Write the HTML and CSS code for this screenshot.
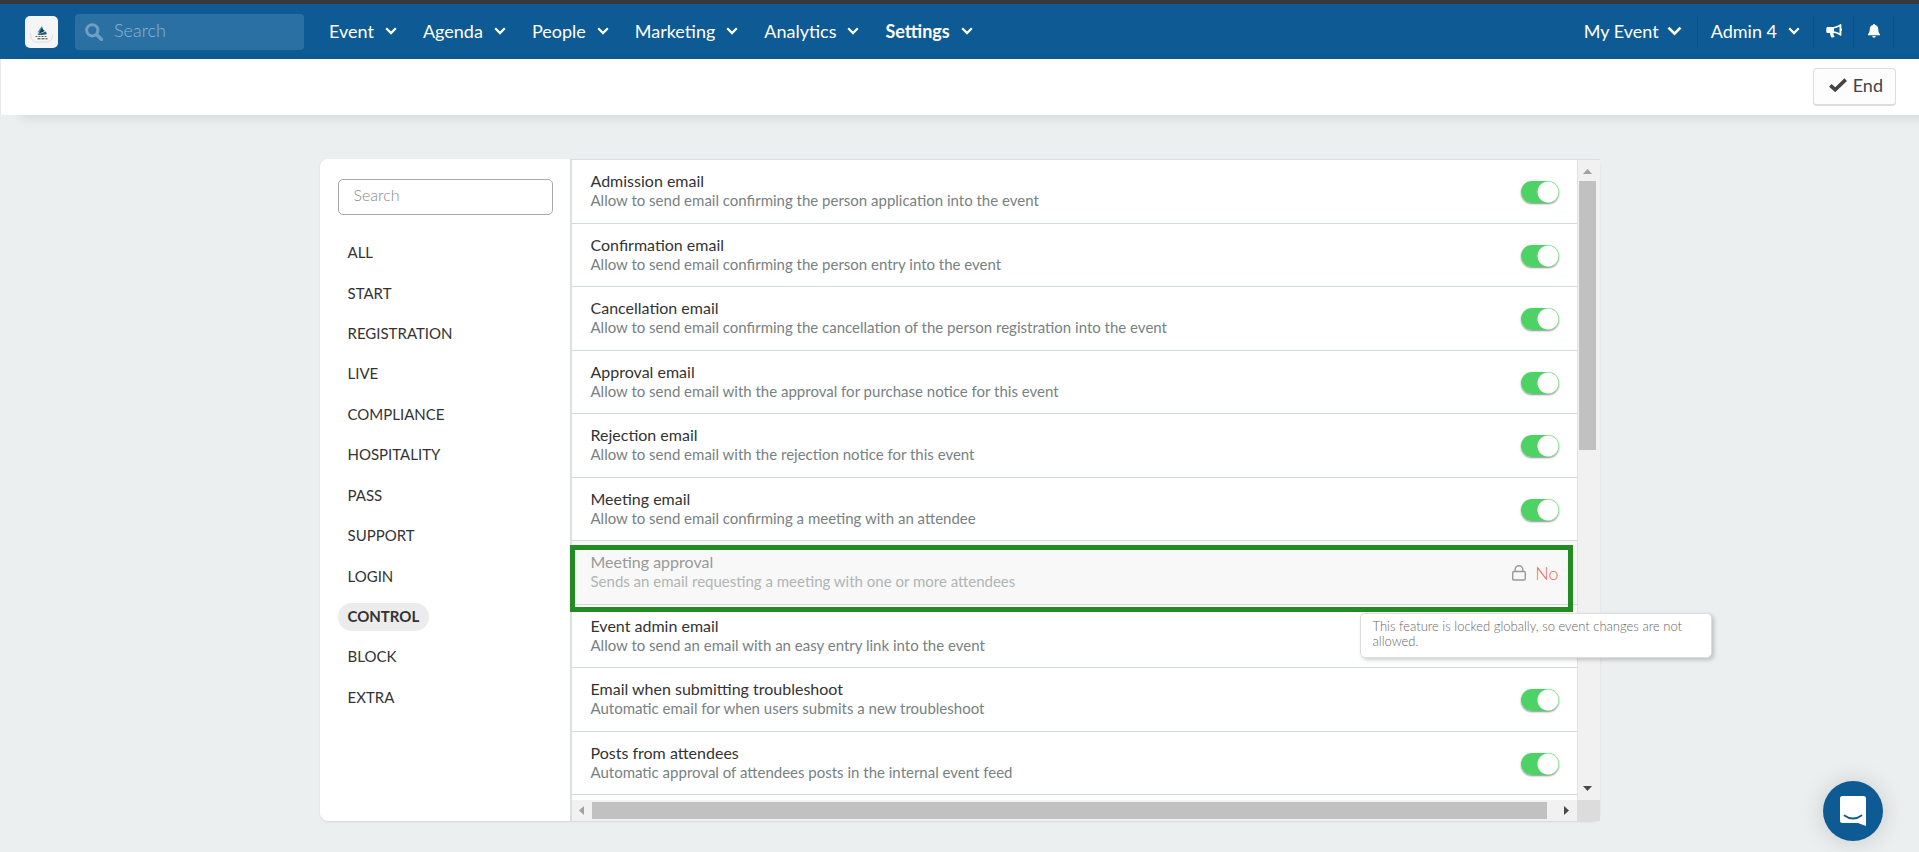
FILE: index.html
```html
<!DOCTYPE html>
<html lang="en">
<head>
<meta charset="utf-8">
<meta name="viewport" content="width=device-width, initial-scale=1">
<title>Event settings</title>
<link rel="stylesheet" href="styles.css">
</head>
<body>
<svg class="defs" aria-hidden="true">
  <symbol id="chevron" viewBox="0 0 12 8"><path d="M1.2 1.3 6 6.1l4.8-4.8" fill="none" stroke="currentColor" stroke-width="2.2"/></symbol>
</svg>

<header class="topbar">
  <a class="logo" href="#" aria-label="Home">
    <svg viewBox="0 0 33 32" width="33" height="32">
      <path d="M16.500 10.500 12.500 16.500c2 0 3.500-1 4.500-3z" fill="#2f8fae"/>
      <path d="M17 9.500c0 3 1.300 4.500 3 5.500l-7 3.200c2-2.500 3.800-4.700 4-8.700z" fill="#163a4c"/>
      <path d="m12 18.800 9-3.300.8 2.700c-3 .9-6 .9-9.800.6z" fill="#1b5d7c"/>
      <path d="M10.500 20.500h12" stroke="#666" stroke-width="1" stroke-dasharray="2 1"/>
      <path d="M12.500 22.800h10" stroke="#333" stroke-width="1" stroke-dasharray="3 1"/>
      <path d="M5.500 17c0 6 2 9 7 9h9c4 0 6-3 6-7" fill="none" stroke="#dedede"/>
    </svg>
  </a>
  <label class="topsearch">
    <svg viewBox="0 0 18 18" width="18" height="18" aria-hidden="true"><circle cx="7.300" cy="7.300" r="5.600" fill="none" stroke="currentColor" stroke-width="3"/><path d="m11.500 11.500 5 5" stroke="currentColor" stroke-width="3.400" stroke-linecap="round"/></svg>
    <input type="search" placeholder="Search" aria-label="Search">
  </label>
  <nav class="menu">
    <button>Event <svg class="chev"><use href="#chevron"/></svg></button>
    <button>Agenda <svg class="chev"><use href="#chevron"/></svg></button>
    <button>People <svg class="chev"><use href="#chevron"/></svg></button>
    <button>Marketing <svg class="chev"><use href="#chevron"/></svg></button>
    <button>Analytics <svg class="chev"><use href="#chevron"/></svg></button>
    <button class="current">Settings <svg class="chev"><use href="#chevron"/></svg></button>
  </nav>
  <div class="account">
    <button class="event-switch">My Event <svg class="chev-big"><use href="#chevron"/></svg></button>
    <button class="admin">Admin 4 <svg class="chev"><use href="#chevron"/></svg></button>
    <button class="tool" aria-label="Announcements">
      <svg viewBox="0 0 16 14" width="16" height="14"><path fill="currentColor" fill-rule="evenodd" d="M14.500 0c.6 0 .9.400.9 1v3.600c.8.300.8 2 0 2.300V11c0 .8-.5 1-1 .8-2-1.600-4-2.500-6.500-2.800-.8.500-.5 1.300 0 1.800-.4.800.2 1.300.8 1.800-.8 1.200-3 1-3.700.3C4.600 11.500 3.800 10.500 4.200 9H2C.9 9 .3 8.300.3 7.400V4.600C.3 3.600 1 3 2 3h4.500c3-.2 5.500-1.300 8-3zm-1 2.500c-1.600 1-3.500 1.700-5.500 2v2.700c2 .3 3.900 1 5.500 2z"/></svg>
    </button>
    <button class="tool" aria-label="Notifications">
      <svg viewBox="0 0 12 14" width="12" height="14"><path fill="currentColor" d="M6 0c.7 0 1 .4 1 1.100 2.200.5 3.300 2 3.300 4.100 0 2.600.5 3.800 1.700 4.900v1.100H0v-1.100c1.200-1.100 1.700-2.300 1.700-4.900C1.700 3.100 2.800 1.600 5 1.100 5 .4 5.300 0 6 0zM4.300 12h3.400c0 1-.7 1.700-1.700 1.700S4.300 13 4.300 12z"/></svg>
    </button>
  </div>
</header>

<div class="actionbar">
  <button class="end"><svg viewBox="0 0 18 14" width="18" height="14" aria-hidden="true"><path d="m1.300 7.300 4.900 4.400L16.700 1.600" fill="none" stroke="currentColor" stroke-width="3.600"/></svg>End</button>
</div>

<main class="page">
  <section class="card">
    <aside class="side">
      <input class="filter" type="search" placeholder="Search" aria-label="Search settings">
      <nav class="groups">
        <a href="#">ALL</a>
        <a href="#">START</a>
        <a href="#">REGISTRATION</a>
        <a href="#">LIVE</a>
        <a href="#">COMPLIANCE</a>
        <a href="#">HOSPITALITY</a>
        <a href="#">PASS</a>
        <a href="#">SUPPORT</a>
        <a href="#">LOGIN</a>
        <a href="#" class="active" aria-current="page">CONTROL</a>
        <a href="#">BLOCK</a>
        <a href="#">EXTRA</a>
      </nav>
    </aside>
    <div class="panel">
      <div class="rows">
        <label class="row"><span class="text"><span class="name">Admission email</span><span class="desc">Allow to send email confirming the person application into the event</span></span><input class="toggle" type="checkbox" checked></label>
        <label class="row"><span class="text"><span class="name">Confirmation email</span><span class="desc">Allow to send email confirming the person entry into the event</span></span><input class="toggle" type="checkbox" checked></label>
        <label class="row"><span class="text"><span class="name">Cancellation email</span><span class="desc">Allow to send email confirming the cancellation of the person registration into the event</span></span><input class="toggle" type="checkbox" checked></label>
        <label class="row"><span class="text"><span class="name">Approval email</span><span class="desc">Allow to send email with the approval for purchase notice for this event</span></span><input class="toggle" type="checkbox" checked></label>
        <label class="row"><span class="text"><span class="name">Rejection email</span><span class="desc">Allow to send email with the rejection notice for this event</span></span><input class="toggle" type="checkbox" checked></label>
        <label class="row"><span class="text"><span class="name">Meeting email</span><span class="desc">Allow to send email confirming a meeting with an attendee</span></span><input class="toggle" type="checkbox" checked></label>
        <div class="row locked">
          <span class="text"><span class="name">Meeting approval</span><span class="desc">Sends an email requesting a meeting with one or more attendees</span></span>
          <span class="state"><svg viewBox="0 0 14 16" width="14" height="16" aria-hidden="true"><rect x=".7" y="6.500" width="12.600" height="8.500" rx="1.200"/><path d="M3.200 6.500V4.500a3.800 3.800 0 0 1 7.600 0v2"/></svg>No</span>
          <span class="outline"></span>
          <span class="tip" role="tooltip">This feature is locked globally, so event changes are not allowed.</span>
        </div>
        <label class="row"><span class="text"><span class="name">Event admin email</span><span class="desc">Allow to send an email with an easy entry link into the event</span></span><input class="toggle" type="checkbox" checked></label>
        <label class="row"><span class="text"><span class="name">Email when submitting troubleshoot</span><span class="desc">Automatic email for when users submits a new troubleshoot</span></span><input class="toggle" type="checkbox" checked></label>
        <label class="row"><span class="text"><span class="name">Posts from attendees</span><span class="desc">Automatic approval of attendees posts in the internal event feed</span></span><input class="toggle" type="checkbox" checked></label>
      </div>
      <div class="vbar">
        <svg viewBox="0 0 9 5" width="9" height="5"><path d="M0 5 4.500 0 9 5z" fill="#a0a0a0"/></svg>
        <div class="vthumb"></div>
        <svg class="end-arrow" viewBox="0 0 9 5" width="9" height="5"><path d="M0 0h9L4.500 5z" fill="#4a4a4a"/></svg>
      </div>
      <div class="hbar">
        <svg viewBox="0 0 5 9" width="5" height="9"><path d="M5 0v9L0 4.500z" fill="#a0a0a0"/></svg>
        <div class="hthumb"></div>
        <svg viewBox="0 0 5 9" width="5" height="9"><path d="M0 0v9l5-4.500z" fill="#4a4a4a"/></svg>
      </div>
      <div class="corner"></div>
    </div>
  </section>
</main>

<button class="chat" aria-label="Open chat">
  <svg viewBox="0 0 26 30" width="26" height="30"><path d="M2.500 0h21A2.500 2.500 0 0 1 26 2.500V30l-8-3H2.500A2.500 2.500 0 0 1 0 24.500v-22A2.500 2.500 0 0 1 2.500 0z" fill="#fff"/><path d="M4.500 19.500c5 4 12 4 17 0" fill="none" stroke="#0e5a93" stroke-width="1.800" stroke-linecap="round"/></svg>
</button>
</body>
</html>
```
FILE: styles.css
```css
* { box-sizing: border-box; }

body {
  margin: 0;
  min-height: 100vh;
  background: #ebeff0;
  color: #333;
  font-family: Lato, "Liberation Sans", sans-serif;
  font-size: 16px;
  overflow: hidden;
}

button {
  font: inherit;
  color: inherit;
  background: none;
  border: 0;
  padding: 0;
}

svg { display: block; }
.defs { position: absolute; width: 0; height: 0; }

/* Top navigation */
.topbar {
  display: flex;
  align-items: center;
  height: 59px;
  padding: 0 25px;
  border-top: 4px solid #36393a;
  background: #0d5a94;
  color: #fff;
  font-size: 18px;
}

.logo {
  width: 33px;
  height: 32px;
  border-radius: 5px;
  background: #f5f5f5;
}

.topsearch {
  display: flex;
  align-items: center;
  gap: 11px;
  width: 229px;
  height: 36px;
  margin-left: 17px;
  padding: 0 10px;
  border-radius: 4px;
  background: #2b70a2;
  color: #6f9fc2;
}

.topsearch input {
  flex: 1;
  min-width: 0;
  padding: 0 0 3px;
  border: 0;
  outline: 0;
  background: none;
  color: #fff;
  font: inherit;
}

.topsearch input::placeholder { color: #8db5d1; font-weight: 300; }

.menu {
  display: flex;
  gap: 26px;
  margin-left: 25px;
}

.menu button, .account button {
  display: flex;
  align-items: center;
  gap: 11px;
  padding-bottom: 2px;
  white-space: nowrap;
}

.menu .current { font-weight: 700; }
.chev { width: 12px; height: 8px; }
.chev-big { width: 15px; height: 10px; }

.account {
  display: flex;
  margin-left: auto;
}

.account button {
  height: 32px;
  border-right: 1px solid #0b5087;
}

.account .event-switch { gap: 8px; padding-right: 15px; }
.account .admin { padding-right: 13px; padding-left: 13px; }
.account .tool { justify-content: center; width: 40px; }

/* Action bar */
.actionbar {
  display: flex;
  justify-content: flex-end;
  padding: 9px 23px;
  border-left: 1px solid #e4e8ea;
  background: #fff;
  box-shadow: 20px 3px 10px #00000018;
}

.end {
  display: flex;
  align-items: center;
  gap: 6px;
  height: 38px;
  padding: 0 12px 3px 15px;
  border: 1px solid #dcdcdc;
  border-bottom-width: 2px;
  border-radius: 4px;
  background: #fdfdfd;
  color: #444;
  font-size: 18px;
}

/* Settings card */
.page { padding: 44px 16px 0; }

.card {
  display: flex;
  max-width: 1280px;
  margin: 0 auto;
  border-radius: 8px;
  background: #fff;
  box-shadow: 0 1px 2px #0000001a;
}

.side {
  flex: none;
  width: 250px;
  padding: 20px 17px 0 18px;
}

.filter {
  display: block;
  width: 100%;
  height: 36px;
  padding: 0 15px 5px;
  border: 1px solid #aaa;
  border-radius: 5px;
  background: #fff;
  outline: 0;
  font: inherit;
}

.filter::placeholder { color: #888; font-weight: 300; }

.groups {
  display: grid;
  grid-auto-rows: 1fr;
  justify-items: start;
  align-items: center;
  height: 485px;
  margin-top: 18px;
}

.groups a {
  padding: 0 10px 2px;
  border-radius: 14px;
  color: #333;
  font-size: 15px;
  line-height: 26px;
  text-decoration: none;
}

.groups .active { background: #ececec; font-weight: 700; }

.panel {
  display: grid;
  grid-template-columns: 1fr 23px;
  grid-template-rows: 640px 21px;
  flex: 1;
  min-width: 0;
  border: 1px solid #dadfe1;
  border-width: 1px 0 0 2px;
}

.rows {
  display: grid;
  grid-auto-rows: 1fr;
  height: 635px;
}

.row {
  position: relative;
  display: flex;
  justify-content: space-between;
  padding: 11px 18px 0 19px;
  border-bottom: 1px solid #d4d9db;
}

.text { display: flex; flex-direction: column; }
.name { line-height: 20px; }
.desc { color: #788183; font-size: 15px; line-height: 18px; }

.toggle {
  flex: none;
  width: 38px;
  height: 22px;
  margin: 10px 0 0;
  border-radius: 11px;
  appearance: none;
  background: radial-gradient(circle at 27px 11px, #fff 10px, #4cd265 11px);
  box-shadow: 0 1px 2px #00000073;
}

.toggle:not(:checked) { background: radial-gradient(circle at 11px 11px, #fff 10px, #ccc 11px); }

.locked { background: #f8f8f8; }
.locked .name { color: #999; }
.locked .desc { color: #b0b4b5; }

.state {
  display: flex;
  align-items: center;
  gap: 9px;
  height: 41px;
  color: #ee6a5b;
  font-size: 18px;
  font-weight: 300;
}

.state svg { fill: none; stroke: #999; stroke-width: 1.4; }

.outline {
  position: absolute;
  inset: 4px 4px -8px -2px;
  border: 5px solid #228b22;
}

.tip {
  position: absolute;
  z-index: 2;
  top: 72px;
  right: -135px;
  width: 352px;
  padding: 5px 12px 8px;
  border: 1px solid #ddd;
  border-radius: 5px;
  background: #fff;
  box-shadow: 2px 2px 4px #00000033;
  color: #666;
  font-size: 13px;
  font-weight: 300;
  line-height: 15px;
}

/* Scroll bars */
.vbar {
  display: flex;
  flex-direction: column;
  align-items: center;
  padding: 9px 3px 9px 1px;
  border-left: 1px solid #e2e2e2;
  background: #f1f1f1;
}

.vthumb {
  width: 17px;
  height: 269px;
  margin-top: 7px;
  background: #c1c1c1;
}

.end-arrow { margin-top: auto; }

.hbar {
  display: flex;
  align-items: center;
  justify-content: space-between;
  padding: 0 8px 0 7px;
  background: #f1f1f1;
}

.hthumb {
  flex: 1;
  height: 17px;
  margin: 0 17px 0 8px;
  background: #c1c1c1;
}

.corner { background: #dcdcdc; }

/* Chat launcher */
.chat {
  position: fixed;
  right: 36px;
  bottom: 11px;
  display: grid;
  place-items: center;
  width: 60px;
  height: 60px;
  border-radius: 50%;
  background: #0e5a93;
  box-shadow: 0 1px 24px #00000026;
}
```
